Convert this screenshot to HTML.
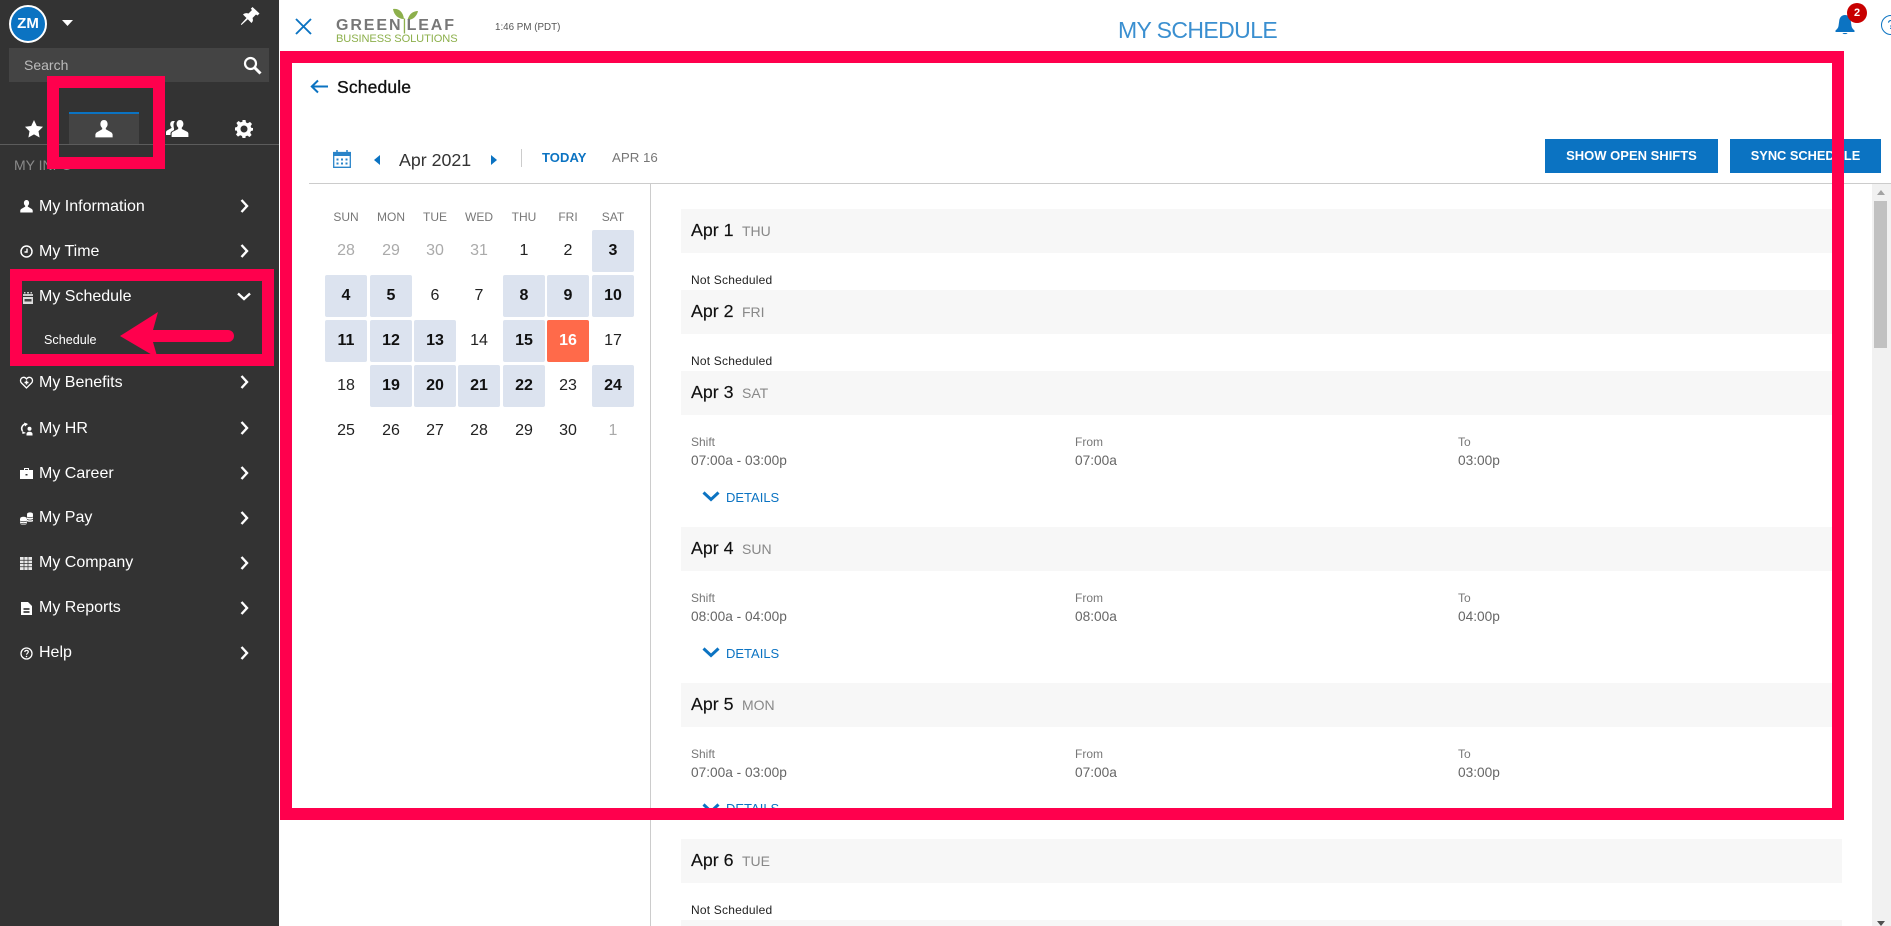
<!DOCTYPE html>
<html>
<head>
<meta charset="utf-8">
<title>My Schedule</title>
<style>
html,body{margin:0;padding:0;width:1891px;height:926px;overflow:hidden;background:#fff;font-family:"Liberation Sans",Arial,sans-serif}
.a{position:absolute;white-space:nowrap;line-height:20px}
.box{position:absolute}
svg{position:absolute;overflow:visible}
.m{left:39px;color:#fff;font-size:16px}
.hd{position:absolute;left:681px;width:1161px;height:44px;background:#f7f7f7}
.dt{left:691px;font-size:17.8px;color:#111;-webkit-text-stroke:.15px #111}
.dw{left:742px;font-size:14px;color:#888}
.ns{left:691px;font-size:12px;color:#222;letter-spacing:.2px}
.l{font-size:12px;color:#777}
.v{font-size:13.7px;color:#666}
.dl{left:726px;font-size:13px;color:#0b73c2}
.c{position:absolute;width:42px;height:42px;line-height:42px;text-align:center;font-size:16px;color:#222;border-radius:2px}
.c.b{background:#dce3ef;font-weight:bold;color:#111}
.c.o{color:#aaa}
.c.t{background:#ff6a4a;color:#fff;font-weight:bold}
.w{position:absolute;width:44px;text-align:center;font-size:12px;color:#777;line-height:20px;top:207px}
.f{position:absolute;border:12px solid #ff004d;box-sizing:border-box;z-index:5}
</style>
</head>
<body>
<!-- Sidebar -->
<div class="box" style="left:0;top:0;width:279px;height:926px;background:#333"></div>
<div class="a" style="left:9px;top:5px;width:38px;height:38px;line-height:34px;border-radius:50%;background:#0b73c2;border:2px solid #fff;box-sizing:border-box;color:#fff;font-weight:bold;font-size:15px;text-align:center">ZM</div>
<svg style="left:62px;top:20px" width="11" height="6"><path d="M0 0H11L5.500 6Z" fill="#fff"/></svg>
<svg style="left:240px;top:7px" width="20" height="19" viewBox="0 0 20 19"><path d="M12.500 0L19.500 6.500 17.500 8.500 16 7.500 12.500 11C13.300 13 13 14.500 11.500 16L7.800 12.300 1.500 18 .8 17.300 6.500 11 3 7.500C4.500 6 6.500 5.700 8.500 6.500L12 3 10.800 1.700Z" fill="#fff"/></svg>
<div class="box" style="left:9px;top:48px;width:260px;height:34px;background:#444"></div>
<div class="a" style="left:24px;top:55px;font-size:14px;color:#bbb">Search</div>
<svg style="left:243px;top:56px" width="19" height="19" viewBox="0 0 19 19"><circle cx="7.500" cy="7.500" r="5.500" fill="none" stroke="#fff" stroke-width="2.200"/><path d="M11.500 11.500L17.500 17.500" stroke="#fff" stroke-width="3"/></svg>

<svg style="left:25px;top:120px" width="18" height="18" viewBox="0 0 18 18"><path d="M9 0L11.800 6 18 6.800 13.500 11.200 14.600 17.500 9 14.400 3.400 17.500 4.500 11.200 0 6.800 6.200 6Z" fill="#fff"/></svg>
<div class="box" style="left:69px;top:112px;width:70px;height:32px;background:#444;border-top:2px solid #0b73c2;box-sizing:border-box"></div>
<svg style="left:95px;top:120px" width="18" height="18" viewBox="0 0 14 14"><path d="M7 0C5.300 0 4.200 1.300 4.200 3.200 4.200 4.500 4.800 5.600 5.600 6.200V7.200L1.500 9.500C.7 10 .3 10.800.3 11.600V13.500H13.700V11.600C13.700 10.800 13.300 10 12.500 9.500L8.400 7.200V6.200C9.200 5.600 9.800 4.500 9.800 3.200 9.800 1.300 8.700 0 7 0Z" fill="#fff"/></svg>
<svg style="left:166px;top:120px" width="23" height="18" viewBox="0 0 23 18"><path d="M7 1C5.300 1 4.200 2.500 4.200 4.300 4.200 5.600 4.800 6.600 5.500 7.200V8L1 10.500C.4 10.900 0 11.500 0 12.200V15H4.500V13.500C4.500 12.500 5 11.700 6 11.200L8 10V9C8 8 7.500 6.500 7.500 5 7.500 3.500 8 2 9 1.500 8.500 1.200 7.800 1 7 1Z" fill="#fff"/><path d="M14 0C12 0 10.600 1.700 10.600 4 10.600 5.500 11.300 6.800 12.200 7.500V9L6.800 11.700C6 12.100 5.600 12.900 5.600 13.800V17H22.400V13.800C22.400 12.900 22 12.100 21.200 11.700L15.800 9V7.500C16.700 6.800 17.400 5.500 17.400 4 17.400 1.700 16 0 14 0Z" fill="#fff"/></svg>
<svg style="left:235px;top:120px" width="18" height="18" viewBox="0 0 18 18"><path d="M7.500 0H10.500L11 2.500 12.800 3.300 15 1.900 17 4 15.600 6.100 16.300 7.900 18 8V10.500L16 11 15.200 12.800 16.600 15 14.500 17 12.400 15.600 10.600 16.300 10.500 18H7.500L7 16 5.200 15.200 3 16.600 1 14.500 2.400 12.400 1.700 10.600 0 10.500V7.500L2 7 2.800 5.200 1.400 3 3.500 1 5.600 2.400 7.400 1.700ZM9 5.500A3.500 3.500 0 1 0 9 12.500 3.500 3.500 0 1 0 9 5.500Z" fill="#fff" fill-rule="evenodd"/></svg>
<div class="box" style="left:0;top:144px;width:279px;height:1px;background:#5c5c5c"></div>
<div class="a" style="left:14px;top:155px;font-size:14px;color:#8a8a8a">MY INFO</div>

<!-- Menu -->
<div class="a m" style="top:197px">My Information</div>
<div class="a m" style="top:242px">My Time</div>
<div class="a m" style="top:287px">My Schedule</div>
<div class="a" style="left:44px;top:330px;color:#fff;font-size:12.6px">Schedule</div>
<div class="a m" style="top:373px">My Benefits</div>
<div class="a m" style="top:419px">My HR</div>
<div class="a m" style="top:464px">My Career</div>
<div class="a m" style="top:508px">My Pay</div>
<div class="a m" style="top:553px">My Company</div>
<div class="a m" style="top:598px">My Reports</div>
<div class="a m" style="top:643px">Help</div>

<!-- menu icons -->
<svg style="left:20px;top:200px" width="13" height="13" viewBox="0 0 14 14"><path d="M7 0C5.300 0 4.200 1.300 4.200 3.200 4.200 4.500 4.800 5.600 5.600 6.200V7.200L1.500 9.500C.7 10 .3 10.800.3 11.600V13.500H13.700V11.600C13.700 10.800 13.300 10 12.500 9.500L8.400 7.200V6.200C9.200 5.600 9.800 4.500 9.800 3.200 9.800 1.300 8.700 0 7 0Z" fill="#fff"/></svg>
<svg style="left:20px;top:245px" width="13" height="13" viewBox="0 0 13 13"><circle cx="6.500" cy="6.500" r="5.500" fill="none" stroke="#fff" stroke-width="1.500"/><path d="M7 3.500V7H4.500" fill="none" stroke="#fff" stroke-width="1.400"/></svg>
<svg style="left:23px;top:292px" width="10" height="12" viewBox="0 0 10 12"><path d="M1 0H2.500V1.500H1ZM4 0H6V1.500H4ZM7.500 0H9V1.500H7.500ZM0 2H10V4H0Z" fill="#ccc"/><path d="M0 5H10V12H0Z" fill="#ddd"/><path d="M1.500 7H8.500V9.500H1.500Z" fill="#444"/></svg>
<svg style="left:20px;top:376px" width="13" height="13" viewBox="0 0 13 13"><path d="M6.500 12L1.500 7C0 5.500 .3 2.800 2 1.800 3.800 .8 5.500 1.500 6.500 3 7.500 1.500 9.200 .8 11 1.800 12.700 2.800 13 5.500 11.500 7Z" fill="none" stroke="#fff" stroke-width="1.300"/><path d="M6.500 4.500V8.500M4.500 6.500H8.500" stroke="#fff" stroke-width="1.500"/></svg>
<svg style="left:20px;top:422px" width="13" height="14" viewBox="0 0 13 14"><path d="M6.500 2A4.500 4.500 0 0 0 2.500 9" fill="none" stroke="#fff" stroke-width="1.600"/><path d="M4 .5L8 2 5 4.500ZM2 9L6 11 2.500 12Z" fill="#fff"/><circle cx="9.500" cy="6.800" r="2" fill="#fff"/><path d="M6.500 13.500V12C6.500 10.500 8 9.800 9.500 9.800S12.500 10.500 12.500 12V13.500Z" fill="#fff"/></svg>
<svg style="left:20px;top:467px" width="13" height="13" viewBox="0 0 13 13"><path d="M4 3V1H9V3H13V12H0V3ZM5 3H8V2H5Z" fill="#fff" fill-rule="evenodd"/><path d="M5.500 7H7.500V8.500H5.500Z" fill="#333"/></svg>
<svg style="left:20px;top:512px" width="13" height="13" viewBox="0 0 13 13"><ellipse cx="10" cy="2" rx="3" ry="1.600" fill="#fff"/><path d="M7 2.500H13V9C13 10 7 10 7 9Z" fill="#fff"/><path d="M7 5C8.500 6 11.500 6 13 5M7 7.300C8.500 8.300 11.500 8.300 13 7.300" fill="none" stroke="#333" stroke-width=".7"/><ellipse cx="3.500" cy="6.500" rx="3.400" ry="1.700" fill="#fff"/><path d="M0 7H7V11.500C7 13 0 13 0 11.500Z" fill="#fff"/><path d="M0 9C1.500 10 5.500 10 7 9M0 11C1.500 12 5.500 12 7 11" fill="none" stroke="#333" stroke-width=".7"/></svg>
<svg style="left:20px;top:557px" width="12" height="13" viewBox="0 0 12 13"><path d="M0 0H12V13H0Z" fill="#e8e8e8"/><path d="M4 0V13M8 0V13M0 3.250H12M0 6.500H12M0 9.750H12" stroke="#333" stroke-width=".7"/></svg>
<svg style="left:21px;top:602px" width="11" height="13" viewBox="0 0 11 13"><path d="M0 0H7L11 4V13H0Z" fill="#fff"/><path d="M2.500 6H8.500V11H2.500Z" fill="#555"/><path d="M2.500 8.500H8.500" stroke="#fff"/></svg>
<svg style="left:20px;top:647px" width="13" height="13" viewBox="0 0 13 13"><circle cx="6.500" cy="6.500" r="5.500" fill="none" stroke="#fff" stroke-width="1.300"/><path d="M4.700 5C4.900 3.800 5.700 3.400 6.500 3.400 7.600 3.400 8.300 4 8.300 4.900 8.300 6.200 6.600 6.200 6.600 7.700" fill="none" stroke="#fff" stroke-width="1.200"/><circle cx="6.500" cy="9.500" r=".8" fill="#fff"/></svg>

<!-- chevrons -->
<svg style="left:240px;top:199px" width="9" height="14" viewBox="0 0 9 14"><path d="M1.500 1L7 7 1.500 13" fill="none" stroke="#fff" stroke-width="2.400"/></svg>
<svg style="left:240px;top:244px" width="9" height="14" viewBox="0 0 9 14"><path d="M1.500 1L7 7 1.500 13" fill="none" stroke="#fff" stroke-width="2.400"/></svg>
<svg style="left:237px;top:292px" width="14" height="9" viewBox="0 0 14 9"><path d="M1 1.500L7 7 13 1.500" fill="none" stroke="#fff" stroke-width="2.400"/></svg>
<svg style="left:240px;top:375px" width="9" height="14" viewBox="0 0 9 14"><path d="M1.500 1L7 7 1.500 13" fill="none" stroke="#fff" stroke-width="2.400"/></svg>
<svg style="left:240px;top:421px" width="9" height="14" viewBox="0 0 9 14"><path d="M1.500 1L7 7 1.500 13" fill="none" stroke="#fff" stroke-width="2.400"/></svg>
<svg style="left:240px;top:466px" width="9" height="14" viewBox="0 0 9 14"><path d="M1.500 1L7 7 1.500 13" fill="none" stroke="#fff" stroke-width="2.400"/></svg>
<svg style="left:240px;top:511px" width="9" height="14" viewBox="0 0 9 14"><path d="M1.500 1L7 7 1.500 13" fill="none" stroke="#fff" stroke-width="2.400"/></svg>
<svg style="left:240px;top:556px" width="9" height="14" viewBox="0 0 9 14"><path d="M1.500 1L7 7 1.500 13" fill="none" stroke="#fff" stroke-width="2.400"/></svg>
<svg style="left:240px;top:601px" width="9" height="14" viewBox="0 0 9 14"><path d="M1.500 1L7 7 1.500 13" fill="none" stroke="#fff" stroke-width="2.400"/></svg>
<svg style="left:240px;top:646px" width="9" height="14" viewBox="0 0 9 14"><path d="M1.500 1L7 7 1.500 13" fill="none" stroke="#fff" stroke-width="2.400"/></svg>

<!-- Top bar -->
<svg style="left:295px;top:18px" width="17" height="17" viewBox="0 0 17 17"><path d="M1 1L16 16M16 1L1 16" stroke="#0b73c2" stroke-width="1.900"/></svg>
<svg style="left:392px;top:8px" width="27" height="13" viewBox="0 0 27 13"><path d="M1 1C6 0 11 3 12 11 6 11 2 7 1 1Z" fill="#8db04c"/><path d="M26 3C21 3 17 6 15.500 12 21 12 25 8 26 3Z" fill="#8db04c"/></svg>
<div class="a" style="left:336px;top:16px;font-size:16px;font-weight:bold;color:#777;letter-spacing:1.900px">GREEN<span style="color:#8db04c;font-weight:normal;letter-spacing:0">|</span>LEAF</div>
<div class="a" style="left:336px;top:29px;font-size:11.100px;color:#8db04c;letter-spacing:-.1px">BUSINESS SOLUTIONS</div>
<div class="a" style="left:495px;top:18px;font-size:9.800px;color:#555">1:46 PM (PDT)</div>
<div class="a" style="left:1118px;top:20px;font-size:23px;color:#3a8fd0;letter-spacing:-.6px">MY SCHEDULE</div>
<svg style="left:1835px;top:14px" width="20" height="21" viewBox="0 0 20 21"><path d="M10 1C6.500 1 4.500 3.500 4.200 7L3.500 12C3.200 14 2 15 .5 16.500V18H19.500V16.500C18 15 16.800 14 16.500 12L15.800 7C15.500 3.500 13.500 1 10 1Z" fill="#0b73c2"/><path d="M7.500 19H12.500C12 20.500 8 20.500 7.500 19Z" fill="#0b73c2"/></svg>
<div class="a" style="left:1847px;top:3px;width:20px;height:20px;background:#c80000;border-radius:50%;color:#fff;text-align:center;font-size:11px;font-weight:bold">2</div>
<div class="a" style="left:1881px;top:15px;width:20px;height:20px;border:1.500px solid #0b73c2;border-radius:50%;box-sizing:border-box;color:#0b73c2;font-size:13px;line-height:17px;text-align:center">?</div>

<!-- Schedule header -->
<svg style="left:310px;top:79px" width="18" height="15" viewBox="0 0 18 15"><path d="M18 7.500H2M8 1.500L1.800 7.500 8 13.500" fill="none" stroke="#0b73c2" stroke-width="2"/></svg>
<div class="a" style="left:337px;top:77px;font-size:17.500px;color:#111;letter-spacing:.15px;-webkit-text-stroke:.35px #111">Schedule</div>

<!-- Toolbar -->
<svg style="left:333px;top:150px" width="18" height="18" viewBox="0 0 18 18"><path d="M.7 2.500H17.300V17.300H.7Z" fill="none" stroke="#2a84c9" stroke-width="1.300"/><path d="M0 2H18V6H0Z" fill="#2a84c9"/><path d="M4 0V3M14 0V3" stroke="#2a84c9" stroke-width="1.500"/><path d="M3.500 8.500H5.500V10.500H3.500ZM8 8.500H10V10.500H8ZM12.500 8.500H14.500V10.500H12.500ZM3.500 12.500H5.500V14.500H3.500ZM8 12.500H10V14.500H8ZM12.500 12.500H14.500V14.500H12.500Z" fill="#2a84c9"/></svg>
<svg style="left:374px;top:155px" width="6" height="10"><path d="M6 0V10L0 5Z" fill="#0b73c2"/></svg>
<div class="a" style="left:399px;top:150px;font-size:17.800px;color:#333">Apr 2021</div>
<svg style="left:491px;top:155px" width="6" height="10"><path d="M0 0V10L6 5Z" fill="#0b73c2"/></svg>
<div class="box" style="left:521px;top:149px;width:1px;height:18px;background:#ccc"></div>
<div class="a" style="left:542px;top:148px;font-size:13px;font-weight:bold;color:#0b73c2;letter-spacing:.1px">TODAY</div>
<div class="a" style="left:612px;top:148px;font-size:13.300px;color:#777">APR 16</div>
<div class="a" style="left:1545px;top:139px;width:173px;height:34px;line-height:34px;background:#0b73c2;color:#fff;text-align:center;font-size:13px;font-weight:bold">SHOW OPEN SHIFTS</div>
<div class="a" style="left:1730px;top:139px;width:151px;height:34px;line-height:34px;background:#0b73c2;color:#fff;text-align:center;font-size:12.800px;font-weight:bold">SYNC SCHEDULE</div>
<div class="box" style="left:309px;top:183px;width:1582px;height:1px;background:#ccc"></div>
<div class="box" style="left:650px;top:184px;width:1px;height:742px;background:#ccc"></div>

<!-- Calendar -->
<div class="w" style="left:324px">SUN</div><div class="w" style="left:369px">MON</div><div class="w" style="left:413px">TUE</div><div class="w" style="left:457px">WED</div><div class="w" style="left:502px">THU</div><div class="w" style="left:546px">FRI</div><div class="w" style="left:591px">SAT</div>

<div class="c o" style="left:325px;top:230px">28</div><div class="c o" style="left:370px;top:230px">29</div><div class="c o" style="left:414px;top:230px">30</div><div class="c o" style="left:458px;top:230px">31</div><div class="c" style="left:503px;top:230px">1</div><div class="c" style="left:547px;top:230px">2</div><div class="c b" style="left:592px;top:230px">3</div>
<div class="c b" style="left:325px;top:275px">4</div><div class="c b" style="left:370px;top:275px">5</div><div class="c" style="left:414px;top:275px">6</div><div class="c" style="left:458px;top:275px">7</div><div class="c b" style="left:503px;top:275px">8</div><div class="c b" style="left:547px;top:275px">9</div><div class="c b" style="left:592px;top:275px">10</div>
<div class="c b" style="left:325px;top:320px">11</div><div class="c b" style="left:370px;top:320px">12</div><div class="c b" style="left:414px;top:320px">13</div><div class="c" style="left:458px;top:320px">14</div><div class="c b" style="left:503px;top:320px">15</div><div class="c t" style="left:547px;top:320px">16</div><div class="c" style="left:592px;top:320px">17</div>
<div class="c" style="left:325px;top:365px">18</div><div class="c b" style="left:370px;top:365px">19</div><div class="c b" style="left:414px;top:365px">20</div><div class="c b" style="left:458px;top:365px">21</div><div class="c b" style="left:503px;top:365px">22</div><div class="c" style="left:547px;top:365px">23</div><div class="c b" style="left:592px;top:365px">24</div>
<div class="c" style="left:325px;top:410px">25</div><div class="c" style="left:370px;top:410px">26</div><div class="c" style="left:414px;top:410px">27</div><div class="c" style="left:458px;top:410px">28</div><div class="c" style="left:503px;top:410px">29</div><div class="c" style="left:547px;top:410px">30</div><div class="c o" style="left:592px;top:410px">1</div>

<!-- Day list -->
<div class="hd" style="top:209px"></div>
<div class="a dt" style="top:220px">Apr 1</div><div class="a dw" style="top:221px">THU</div>
<div class="a ns" style="top:270px">Not Scheduled</div>

<div class="hd" style="top:290px"></div>
<div class="a dt" style="top:301px">Apr 2</div><div class="a dw" style="top:302px">FRI</div>
<div class="a ns" style="top:351px">Not Scheduled</div>

<div class="hd" style="top:371px"></div>
<div class="a dt" style="top:382px">Apr 3</div><div class="a dw" style="top:383px">SAT</div>
<div class="a l" style="left:691px;top:432px">Shift</div><div class="a v" style="left:691px;top:451px">07:00a - 03:00p</div>
<div class="a l" style="left:1075px;top:432px">From</div><div class="a v" style="left:1075px;top:451px">07:00a</div>
<div class="a l" style="left:1458px;top:432px">To</div><div class="a v" style="left:1458px;top:451px">03:00p</div>
<svg style="left:702px;top:491px" width="18" height="11" viewBox="0 0 18 11"><path d="M1.500 1.500L9 8.500 16.500 1.500" fill="none" stroke="#0b73c2" stroke-width="3"/></svg>
<div class="a dl" style="top:488px">DETAILS</div>

<div class="hd" style="top:527px"></div>
<div class="a dt" style="top:538px">Apr 4</div><div class="a dw" style="top:539px">SUN</div>
<div class="a l" style="left:691px;top:588px">Shift</div><div class="a v" style="left:691px;top:607px">08:00a - 04:00p</div>
<div class="a l" style="left:1075px;top:588px">From</div><div class="a v" style="left:1075px;top:607px">08:00a</div>
<div class="a l" style="left:1458px;top:588px">To</div><div class="a v" style="left:1458px;top:607px">04:00p</div>
<svg style="left:702px;top:647px" width="18" height="11" viewBox="0 0 18 11"><path d="M1.500 1.500L9 8.500 16.500 1.500" fill="none" stroke="#0b73c2" stroke-width="3"/></svg>
<div class="a dl" style="top:644px">DETAILS</div>

<div class="hd" style="top:683px"></div>
<div class="a dt" style="top:694px">Apr 5</div><div class="a dw" style="top:695px">MON</div>
<div class="a l" style="left:691px;top:744px">Shift</div><div class="a v" style="left:691px;top:763px">07:00a - 03:00p</div>
<div class="a l" style="left:1075px;top:744px">From</div><div class="a v" style="left:1075px;top:763px">07:00a</div>
<div class="a l" style="left:1458px;top:744px">To</div><div class="a v" style="left:1458px;top:763px">03:00p</div>
<svg style="left:702px;top:803px" width="18" height="11" viewBox="0 0 18 11"><path d="M1.500 1.500L9 8.500 16.500 1.500" fill="none" stroke="#0b73c2" stroke-width="3"/></svg>
<div class="a dl" style="top:799px">DETAILS</div>

<div class="hd" style="top:839px"></div>
<div class="a dt" style="top:850px">Apr 6</div><div class="a dw" style="top:851px">TUE</div>
<div class="a ns" style="top:900px">Not Scheduled</div>
<div class="hd" style="top:920px;height:6px"></div>

<!-- Scrollbar -->
<div class="box" style="left:1872px;top:184px;width:19px;height:742px;background:#f1f1f1"></div>
<div class="box" style="left:1874px;top:201px;width:13px;height:147px;background:#c1c1c1"></div>
<svg style="left:1877px;top:190px" width="8" height="5"><path d="M4 0L8 5H0Z" fill="#a3a3a3"/></svg>
<svg style="left:1877px;top:921px" width="8" height="5"><path d="M0 0H8L4 5Z" fill="#505050"/></svg>

<!-- Annotation frames -->
<div class="f" style="left:280px;top:51px;width:1564px;height:769px"></div>
<div class="f" style="left:47px;top:76px;width:118px;height:93px"></div>
<div class="f" style="left:10px;top:269px;width:264px;height:97px"></div>
<svg style="left:0;top:0;z-index:6" width="280" height="400"><path d="M120 336L158 312 153 330H228A6 6 0 0 1 228 342H153L157 356 154 356Z" fill="#ff004d"/></svg>
</body>
</html>
